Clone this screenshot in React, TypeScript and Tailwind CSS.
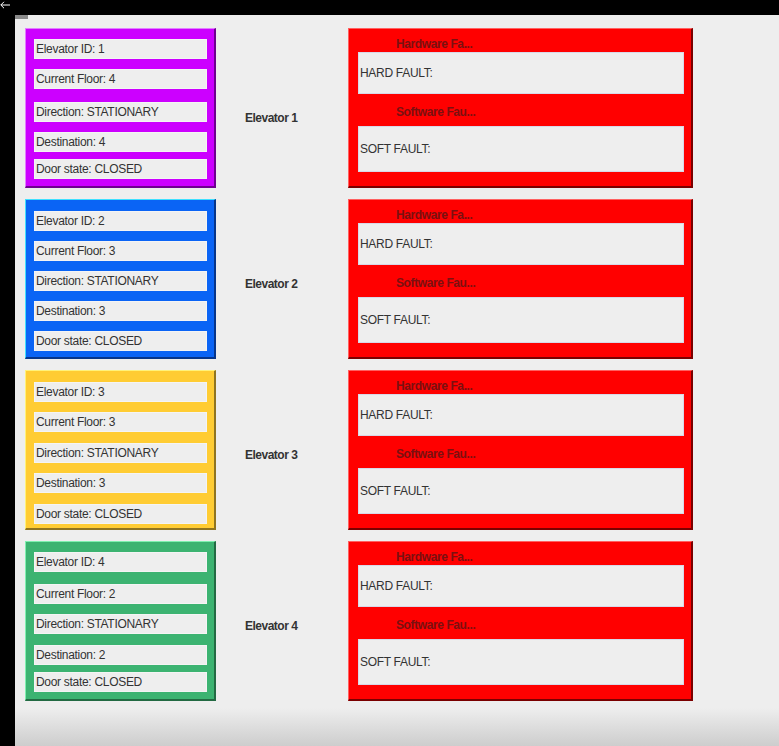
import React from 'react';

interface ElevatorItem {
    id: number;
    floor: number;
    destination: number;
    fill: string;
    edge: string;
    gaps: string[];
    labelPad: string;
}

const elevators: ElevatorItem[] = [
    { id: 1, floor: 4, destination: 4, fill: "bg-[#cc00ff]", edge: "border-t-[#e27dff] border-l-[#e27dff] border-r-[#6e0090] border-b-[#6e0090]", gaps: ["mt-[10px]", "mt-[10px]", "mt-[13px]", "mt-[10px]", "mt-[7px]"], labelPad: "pt-[20px]" },
    { id: 2, floor: 3, destination: 3, fill: "bg-[#0a64f5]", edge: "border-t-[#3ee0ff] border-l-[#3ee0ff] border-r-[#06358a] border-b-[#06358a]", gaps: ["mt-[11px]", "mt-[10px]", "mt-[10px]", "mt-[10px]", "mt-[10px]"], labelPad: "pt-[10px]" },
    { id: 3, floor: 3, destination: 3, fill: "bg-[#ffcc33]", edge: "border-t-[#fff27a] border-l-[#fff27a] border-r-[#8f7420] border-b-[#8f7420]", gaps: ["mt-[11px]", "mt-[10px]", "mt-[11px]", "mt-[10px]", "mt-[11px]"], labelPad: "pt-[10px]" },
    { id: 4, floor: 2, destination: 2, fill: "bg-[#3cb371]", edge: "border-t-[#7ff0b0] border-l-[#7ff0b0] border-r-[#236a43] border-b-[#236a43]", gaps: ["mt-[10px]", "mt-[12px]", "mt-[10px]", "mt-[11px]", "mt-[7px]"], labelPad: "pt-[10px]" },
];

const font = { fontFamily: '"Liberation Sans", Arial, sans-serif' };

const ElevatorRow: React.FC<{ item: ElevatorItem }> = ({ item }) => {
    const fields: string[] = [
        `Elevator ID: ${item.id}`,
        `Current Floor: ${item.floor}`,
        "Direction: STATIONARY",
        `Destination: ${item.destination}`,
        "Door state: CLOSED",
    ];

    return (
        <div className="flex h-[160px]">
            <div className={`w-[191px] h-full border-t border-l border-r-2 border-b-2 ${item.fill} ${item.edge} pl-[8px] pr-[7px]`}>
                {fields.map((f, i) => (
                    <div key={i} className={`${item.gaps[i]} h-[20px] bg-[#eeeeee] border border-[#f4f4f4] flex items-center pl-[1px] text-[12px] tracking-[-0.3px] text-[#333333] whitespace-nowrap`}>{f}</div>
                ))}
            </div>
            <div className={`w-[132px] flex items-center pl-[29px] ${item.labelPad} text-[12px] font-bold tracking-[-0.5px] text-[#333333]`}>Elevator {item.id}</div>
            <div className="w-[345px] h-full bg-[#ff0000] border-t border-l border-r-2 border-b-2 border-t-[#ff6060] border-l-[#ff6060] border-r-[#7a0000] border-b-[#7a0000] pl-[9px] pr-[7px]">
                <div className="h-[23px] pl-[38px] pt-[9px] text-[12px] font-bold leading-none tracking-[-0.4px] text-[#7a1010]">Hardware Fa...</div>
                <div className="h-[42px] bg-[#eeeeee] border border-[#d8d8e8] flex items-center pl-[1px] text-[12px] tracking-[-0.3px] text-[#333333]">HARD FAULT:</div>
                <div className="h-[32px] pl-[38px] pt-[12px] text-[12px] font-bold leading-none tracking-[-0.4px] text-[#7a1010]">Software Fau...</div>
                <div className="h-[46px] bg-[#eeeeee] border border-[#d8d8e8] flex items-center pl-[1px] text-[12px] tracking-[-0.3px] text-[#333333]">SOFT FAULT:</div>
            </div>
        </div>
    );
};

const App: React.FC = () => {
    return (
        <div className="w-[779px] h-[746px] bg-black flex flex-col overflow-hidden" style={font}>
            <div className="h-[15px] flex items-start pt-[1px]">
                <svg width="10" height="8" viewBox="0 0 10 8" fill="none" stroke="white" strokeWidth="1">
                    <path d="M10 4H0.8M4 0.8L0.8 4L4 7.2" />
                </svg>
            </div>
            <div className="flex flex-1">
                <div className="w-[15px]"></div>
                <div className="flex-1 bg-[#eeeeee] flex flex-col">
                    <div className="h-[4px] w-[13px] bg-[#8a8a8a]"></div>
                    <div className="flex flex-col gap-[11px] pl-[10px] pt-[9px]">
                        {elevators.map((item) => (
                            <ElevatorRow key={item.id} item={item} />
                        ))}
                    </div>
                    <div className="flex-1"></div>
                    <div className="h-[38px] bg-gradient-to-b from-[#eeeeee] to-[#cdcdcd]"></div>
                </div>
            </div>
        </div>
    );
};

export default App;
